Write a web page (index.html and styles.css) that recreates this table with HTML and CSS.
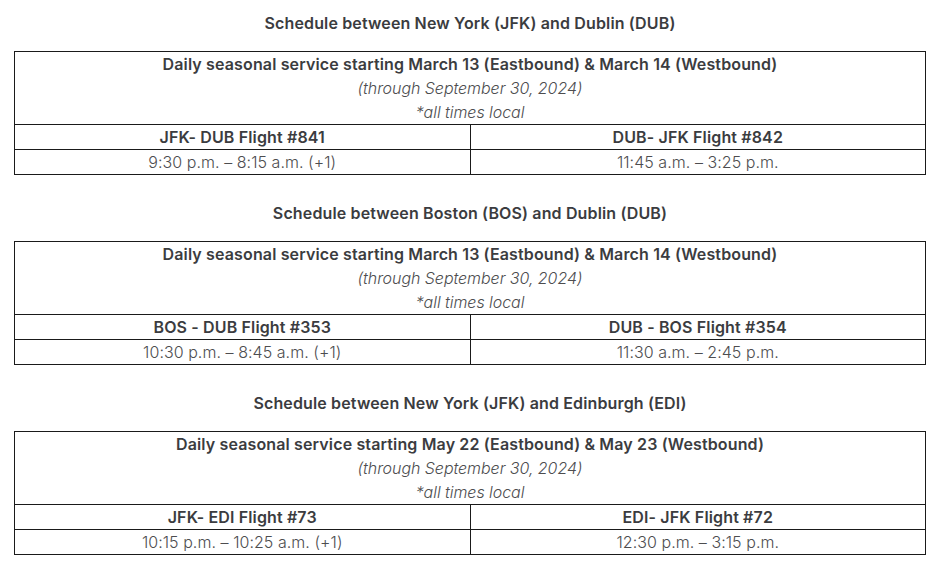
FILE: index.html
```html
<!DOCTYPE html>
<html lang="en">
<head>
<meta charset="utf-8">
<title>Flight schedules</title>
<link rel="stylesheet" href="styles.css">
</head>
<body>
<main class="page">
  <section class="schedule">
    <h2 class="schedule-title">Schedule between New York (JFK) and Dublin (DUB)</h2>
    <table class="schedule-table">
      <tr><td colspan="2" class="intro">
        <div class="intro-main">Daily seasonal service starting March 13 (Eastbound) &amp; March 14 (Westbound)</div>
        <div class="intro-note">(through September 30, 2024)</div>
        <div class="intro-note">*all times local</div>
      </td></tr>
      <tr><th>JFK- DUB Flight #841</th><th>DUB- JFK Flight #842</th></tr>
      <tr><td>9:30 p.m. – 8:15 a.m. (+1)</td><td>11:45 a.m. – 3:25 p.m.</td></tr>
    </table>
  </section>
  <section class="schedule">
    <h2 class="schedule-title">Schedule between Boston (BOS) and Dublin (DUB)</h2>
    <table class="schedule-table">
      <tr><td colspan="2" class="intro">
        <div class="intro-main">Daily seasonal service starting March 13 (Eastbound) &amp; March 14 (Westbound)</div>
        <div class="intro-note">(through September 30, 2024)</div>
        <div class="intro-note">*all times local</div>
      </td></tr>
      <tr><th>BOS - DUB Flight #353</th><th>DUB - BOS Flight #354</th></tr>
      <tr><td>10:30 p.m. – 8:45 a.m. (+1)</td><td>11:30 a.m. – 2:45 p.m.</td></tr>
    </table>
  </section>
  <section class="schedule">
    <h2 class="schedule-title">Schedule between New York (JFK) and Edinburgh (EDI)</h2>
    <table class="schedule-table">
      <tr><td colspan="2" class="intro">
        <div class="intro-main">Daily seasonal service starting May 22 (Eastbound) &amp; May 23 (Westbound)</div>
        <div class="intro-note">(through September 30, 2024)</div>
        <div class="intro-note">*all times local</div>
      </td></tr>
      <tr><th>JFK- EDI Flight #73</th><th>EDI- JFK Flight #72</th></tr>
      <tr><td>10:15 p.m. – 10:25 a.m. (+1)</td><td>12:30 p.m. – 3:15 p.m.</td></tr>
    </table>
  </section>
</main>
</body>
</html>
```
FILE: styles.css
```css
html, body {
  margin: 0;
  padding: 0;
  background: #ffffff;
}
body {
  font-family: Inter, "Noto Sans", "Liberation Sans", sans-serif;
  font-size: 16px;
  letter-spacing: 0.14px;
  color: #3b3c40;
}
.page {
  padding: 11px 0 0 14px;
  width: 912px;
}
.schedule {
  height: 190px;
}
.schedule-title {
  margin: 0;
  height: 40px;
  line-height: 24px;
  font-size: 16px;
  font-weight: 600;
  text-align: center;
  color: #3b3c40;
}
.schedule-table {
  width: 912px;
  border-collapse: collapse;
  table-layout: fixed;
}
.schedule-table td,
.schedule-table th {
  border: 1px solid #1a1a1a;
  padding: 0;
  line-height: 24px;
  text-align: center;
  vertical-align: middle;
}
.schedule-table th {
  font-weight: 600;
  color: #3b3c40;
}
.schedule-table td {
  font-weight: 300;
  letter-spacing: 0.05px;
  color: #4d4d4f;
}
.intro-main {
  font-weight: 600;
  letter-spacing: 0.14px;
  color: #3b3c40;
}
.intro-note {
  font-style: italic;
  font-weight: 300;
  letter-spacing: -0.05px;
  color: #4d4d4f;
}
```
